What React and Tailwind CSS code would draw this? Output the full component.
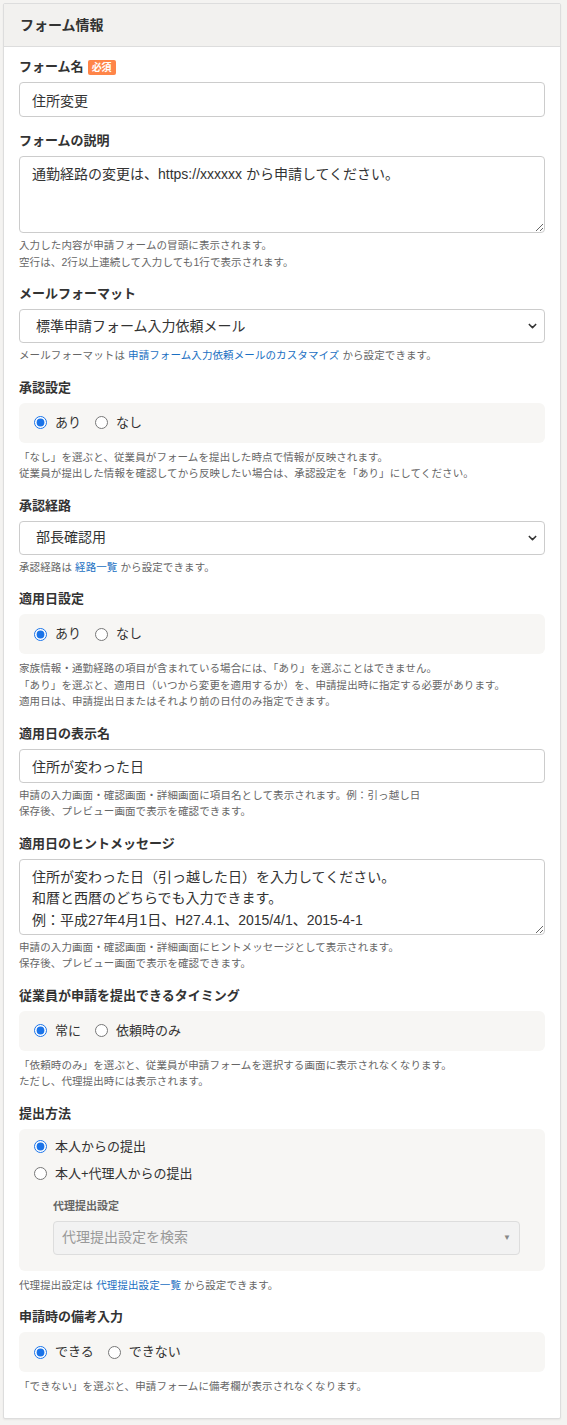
import { useState } from 'react';

const FONT = { fontFamily: '"Helvetica Neue", "Liberation Sans", "Noto Sans CJK JP", sans-serif' };

function Label({ children, required }) {
  return (
    <div className="flex items-center h-[20px] mb-[5px] text-[13px] font-bold leading-[20px] text-[#333]">
      {children}
      {required && (
        <span className="ml-[4px] px-[4px] rounded-[2px] bg-[#ff8548] text-white text-[10px] leading-[15px] font-bold">必須</span>
      )}
    </div>
  );
}

function Help({ lines, boxed }) {
  return (
    <div className={`${boxed ? 'mt-[6px]' : 'mt-[4px]'} text-[10.5px] leading-[16.5px] tracking-[0.1px] text-[#666]`}>
      {lines.map((l, i) => (
        <div key={i} className="h-[16.5px] whitespace-nowrap">
          {l}
        </div>
      ))}
    </div>
  );
}

function Chevron() {
  return (
    <svg className="pointer-events-none absolute right-[7px] top-1/2 -translate-y-1/2" width="11" height="11" viewBox="0 0 12 12">
      <path d="M2.5 4.3 L6 7.8 L9.5 4.3" fill="none" stroke="#333" strokeWidth="1.7" strokeLinecap="round" strokeLinejoin="round" />
    </svg>
  );
}

function Select({ value, options }) {
  return (
    <div className="relative">
      <select
        defaultValue={value}
        className="block w-full h-[34px] appearance-none rounded-[4px] border border-[#ccc] bg-white pl-[16px] pr-[30px] text-[14px] text-[#333] outline-none"
      >
        {options.map((o) => (
          <option key={o}>{o}</option>
        ))}
      </select>
      <Chevron />
    </div>
  );
}

function Radio({ name, value, checked, onChange, children }) {
  return (
    <label className="flex items-center h-[20px] gap-[8px] text-[13px] leading-[20px] text-[#333]">
      <input
        type="radio"
        name={name}
        checked={checked}
        onChange={() => onChange(value)}
        className="m-0 size-[13px] accent-[#1a73e8]"
      />
      {children}
    </label>
  );
}

function RadioBox({ name, options, value, onChange }) {
  return (
    <div className="flex items-center gap-[14px] h-[40px] px-[15px] rounded-[6px] bg-[#f7f6f4]">
      {options.map((o) => (
        <Radio key={o} name={name} value={o} checked={value === o} onChange={onChange}>
          {o}
        </Radio>
      ))}
    </div>
  );
}

const Link = ({ children }) => <span className="text-[#1a6fc2]">{children}</span>;

export default function App() {
  const [approval, setApproval] = useState('あり');
  const [applyDate, setApplyDate] = useState('あり');
  const [timing, setTiming] = useState('常に');
  const [method, setMethod] = useState('本人からの提出');
  const [note, setNote] = useState('できる');

  return (
    <div style={FONT} className="min-h-[1425px] bg-[#f4f3f1] pt-[3px] pb-[6px]">
      <div className="ml-[3px] w-[558px] border border-[#ddd] rounded-[2px] bg-white shadow-[0_1px_2px_rgba(0,0,0,0.06)]">
        <div className="h-[43px] flex items-center pl-[16px] pt-[1px] bg-[#f2f1ef] border-b border-[#ddd] text-[14px] font-bold text-[#333]">
          フォーム情報
        </div>

        <div className="px-[15px] pt-[10px] pb-[23px] flex flex-col gap-[14px]">
          <div>
            <Label required>フォーム名</Label>
            <input
              defaultValue="住所変更"
              className="block w-full h-[35px] rounded-[4px] border border-[#ccc] px-[12px] text-[14px] text-[#333] outline-none"
            />
          </div>

          <div>
            <Label>フォームの説明</Label>
            <textarea
              defaultValue="通勤経路の変更は、https://xxxxxx から申請してください。"
              className="block w-full h-[77px] rounded-[4px] border border-[#ccc] px-[12px] pt-[7px] text-[14px] leading-[21px] text-[#333] outline-none"
            />
            <Help lines={['入力した内容が申請フォームの冒頭に表示されます。', '空行は、2行以上連続して入力しても1行で表示されます。']} />
          </div>

          <div>
            <Label>メールフォーマット</Label>
            <Select value="標準申請フォーム入力依頼メール" options={['標準申請フォーム入力依頼メール']} />
            <Help
              lines={[
                <>
                  メールフォーマットは <Link>申請フォーム入力依頼メールのカスタマイズ</Link> から設定できます。
                </>,
              ]}
            />
          </div>

          <div>
            <Label>承認設定</Label>
            <RadioBox name="approval" options={['あり', 'なし']} value={approval} onChange={setApproval} />
            <Help
              boxed
              lines={[
                '「なし」を選ぶと、従業員がフォームを提出した時点で情報が反映されます。',
                '従業員が提出した情報を確認してから反映したい場合は、承認設定を「あり」にしてください。',
              ]}
            />
          </div>

          <div>
            <Label>承認経路</Label>
            <Select value="部長確認用" options={['部長確認用']} />
            <Help
              lines={[
                <>
                  承認経路は <Link>経路一覧</Link> から設定できます。
                </>,
              ]}
            />
          </div>

          <div>
            <Label>適用日設定</Label>
            <RadioBox name="applyDate" options={['あり', 'なし']} value={applyDate} onChange={setApplyDate} />
            <Help
              boxed
              lines={[
                '家族情報・通勤経路の項目が含まれている場合には、「あり」を選ぶことはできません。',
                '「あり」を選ぶと、適用日（いつから変更を適用するか）を、申請提出時に指定する必要があります。',
                '適用日は、申請提出日またはそれより前の日付のみ指定できます。',
              ]}
            />
          </div>

          <div>
            <Label>適用日の表示名</Label>
            <input
              defaultValue="住所が変わった日"
              className="block w-full h-[34px] rounded-[4px] border border-[#ccc] px-[12px] text-[14px] text-[#333] outline-none"
            />
            <Help
              lines={[
                '申請の入力画面・確認画面・詳細画面に項目名として表示されます。例：引っ越し日',
                '保存後、プレビュー画面で表示を確認できます。',
              ]}
            />
          </div>

          <div>
            <Label>適用日のヒントメッセージ</Label>
            <textarea
              defaultValue={'住所が変わった日（引っ越した日）を入力してください。\n和暦と西暦のどちらでも入力できます。\n例：平成27年4月1日、H27.4.1、2015/4/1、2015-4-1'}
              className="block w-full h-[76px] rounded-[4px] border border-[#ccc] px-[12px] pt-[7px] text-[14px] leading-[21.5px] text-[#333] outline-none"
            />
            <Help
              lines={[
                '申請の入力画面・確認画面・詳細画面にヒントメッセージとして表示されます。',
                '保存後、プレビュー画面で表示を確認できます。',
              ]}
            />
          </div>

          <div>
            <Label>従業員が申請を提出できるタイミング</Label>
            <RadioBox name="timing" options={['常に', '依頼時のみ']} value={timing} onChange={setTiming} />
            <Help
              boxed
              lines={[
                '「依頼時のみ」を選ぶと、従業員が申請フォームを選択する画面に表示されなくなります。',
                'ただし、代理提出時には表示されます。',
              ]}
            />
          </div>

          <div>
            <Label>提出方法</Label>
            <div className="rounded-[6px] bg-[#f7f6f4] pt-[8px] pb-[16px]">
              <div className="flex flex-col gap-[7px] px-[15px]">
                <Radio name="method" value="本人からの提出" checked={method === '本人からの提出'} onChange={setMethod}>
                  本人からの提出
                </Radio>
                <Radio name="method" value="本人+代理人からの提出" checked={method === '本人+代理人からの提出'} onChange={setMethod}>
                  本人+代理人からの提出
                </Radio>
              </div>
              <div className="ml-[34px] mr-[25px] mt-[14px]">
                <div className="h-[16px] text-[11px] font-bold leading-[16px] text-[#666] mb-[7px]">代理提出設定</div>
                <div className="relative h-[34px] flex items-center rounded-[4px] border border-[#ddd] bg-[#f2f2f2] px-[8px] text-[14px] text-[#999]">
                  代理提出設定を検索
                  <span className="absolute right-[8px] top-1/2 -translate-y-1/2 text-[8px] text-[#888]">▼</span>
                </div>
              </div>
            </div>
            <Help
              boxed
              lines={[
                <>
                  代理提出設定は <Link>代理提出設定一覧</Link> から設定できます。
                </>,
              ]}
            />
          </div>

          <div>
            <Label>申請時の備考入力</Label>
            <RadioBox name="note" options={['できる', 'できない']} value={note} onChange={setNote} />
            <Help boxed lines={['「できない」を選ぶと、申請フォームに備考欄が表示されなくなります。']} />
          </div>
        </div>
      </div>
    </div>
  );
}
